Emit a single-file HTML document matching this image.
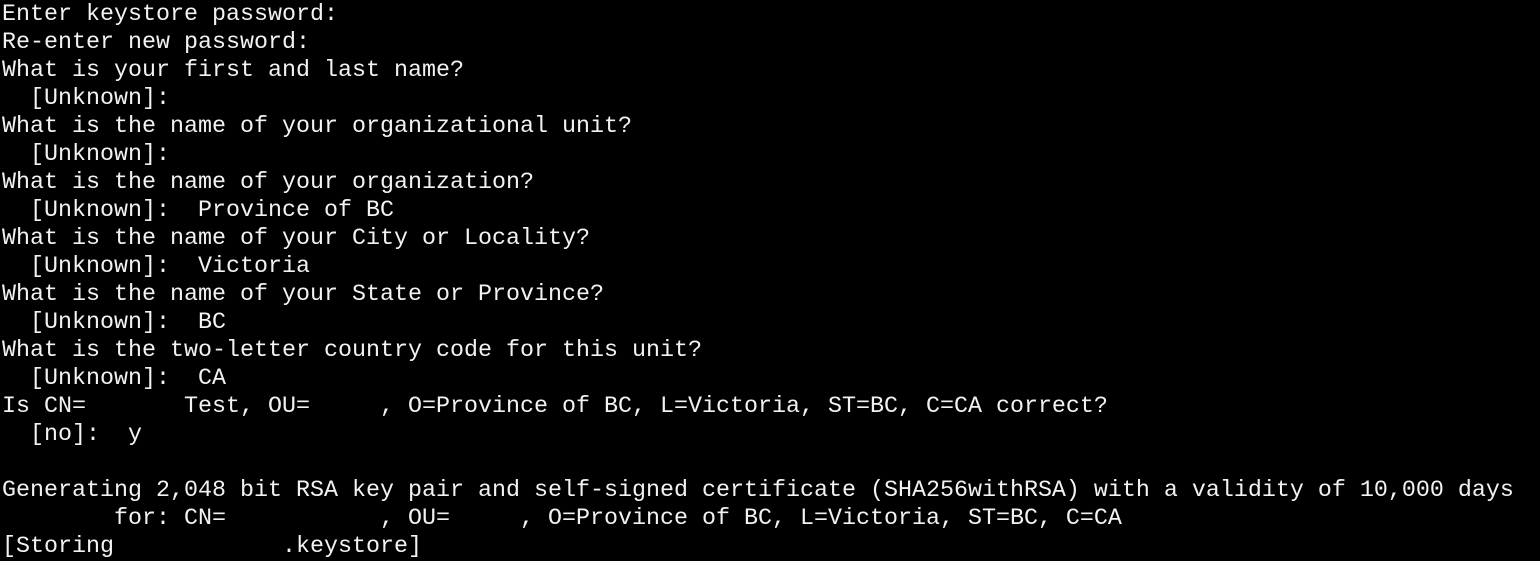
<!DOCTYPE html>
<html><head><meta charset="utf-8"><style>
html,body{margin:0;padding:0;background:#000;width:1540px;height:560px;overflow:hidden}
pre{margin:0;padding:0;position:absolute;left:2px;top:1px;font-family:"Liberation Mono",monospace;font-size:23.33px;line-height:28px;color:#f2f2f2;white-space:pre}
</style></head><body><pre>Enter keystore password:
Re-enter new password:
What is your first and last name?
  [Unknown]:
What is the name of your organizational unit?
  [Unknown]:
What is the name of your organization?
  [Unknown]:  Province of BC
What is the name of your City or Locality?
  [Unknown]:  Victoria
What is the name of your State or Province?
  [Unknown]:  BC
What is the two-letter country code for this unit?
  [Unknown]:  CA
Is CN=       Test, OU=     , O=Province of BC, L=Victoria, ST=BC, C=CA correct?
  [no]:  y

Generating 2,048 bit RSA key pair and self-signed certificate (SHA256withRSA) with a validity of 10,000 days
        for: CN=           , OU=     , O=Province of BC, L=Victoria, ST=BC, C=CA
[Storing            .keystore]</pre></body></html>
